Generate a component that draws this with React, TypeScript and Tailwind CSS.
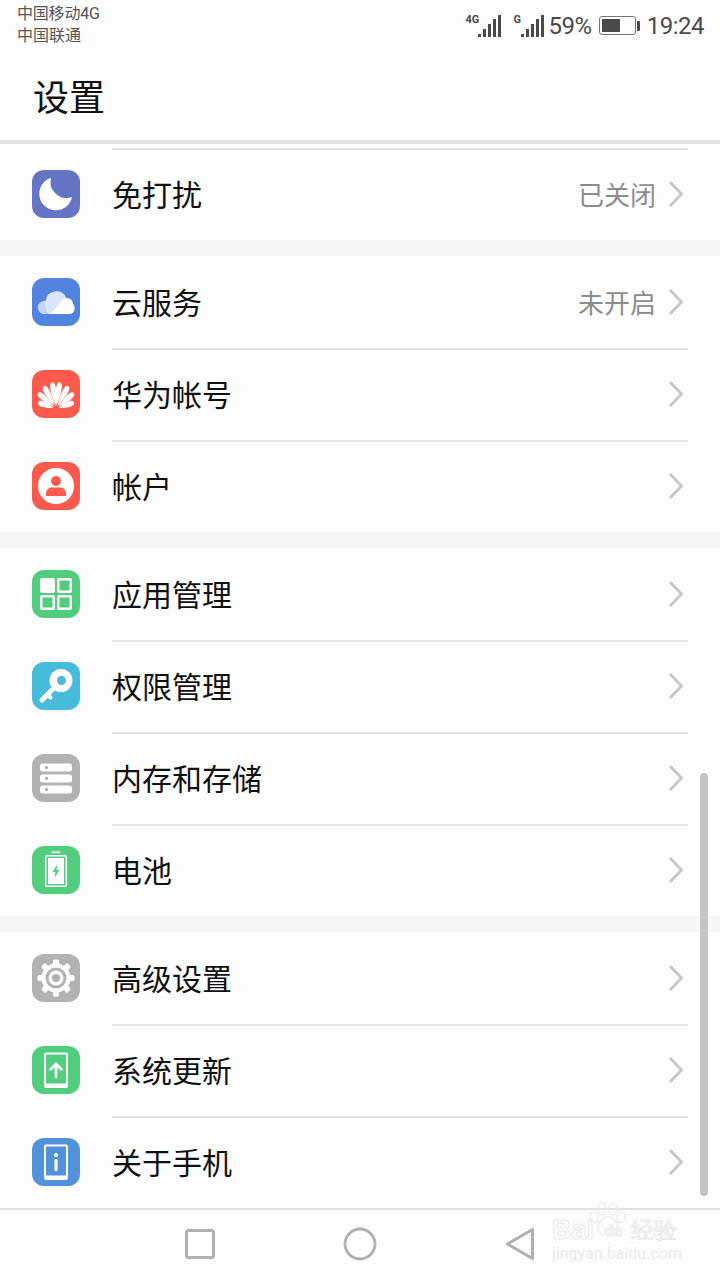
import type { ReactNode } from 'react';

const white = '#ffffff';

function Tile({ color, children }: { color: string; children: ReactNode }) {
  return (
    <div className="h-12 w-12 shrink-0 overflow-hidden rounded-[12px]" style={{ backgroundColor: color }}>
      <svg viewBox="0 0 48 48" className="h-12 w-12" fill="none">
        {children}
      </svg>
    </div>
  );
}

function MoonIcon() {
  return (
    <Tile color="#6574c4">
      <path d="M19 8A16.500 16.500 0 1 0 40 27A16 16 0 0 1 19 8Z" fill={white} />
    </Tile>
  );
}

function CloudIcon() {
  return (
    <Tile color="#5283de">
      <circle cx="12.500" cy="29.500" r="6.700" fill="#c4d5f5" />
      <path d="M16 36C13.500 30 12.500 27 13.500 23A11 11 0 0 1 34 19L30 36Z" fill="#d9e5f9" />
      <path d="M17 36C23 33 26 27 29 23C33 17.500 41 20 41 26C44 29 43 36 37.500 36Z" fill={white} />
    </Tile>
  );
}

function HuaweiIcon() {
  const petals = [
    { a: -70, l: 19 },
    { a: -48, l: 24 },
    { a: -28, l: 26 },
    { a: -8, l: 27 },
    { a: 8, l: 27 },
    { a: 28, l: 26 },
    { a: 48, l: 24 },
    { a: 70, l: 19 },
  ];
  return (
    <Tile color="#fb5a4c">
      {petals.map((p) => (
        <path
          key={p.a}
          d={`M24 36C20 ${39 - p.l * 0.7} 20.500 ${39 - p.l} 24 ${39 - p.l}C27.500 ${39 - p.l} 28 ${39 - p.l * 0.7} 24 36Z`}
          fill={white}
          transform={`rotate(${p.a} 24 39)`}
        />
      ))}
    </Tile>
  );
}

function AccountIcon() {
  return (
    <Tile color="#fb5a4c">
      <circle cx="24" cy="24" r="18" fill={white} />
      <circle cx="24" cy="19" r="5" fill="#fb5a4c" />
      <path d="M14 34V31C14 27.500 17 25.500 20 25.500H28C31 25.500 34 27.500 34 31V34Z" fill="#fb5a4c" />
    </Tile>
  );
}

function AppsIcon() {
  return (
    <Tile color="#52cc7d">
      <rect x="8" y="8" width="15" height="15" rx="2" fill={white} />
      <rect x="26.250" y="9.250" width="12.500" height="12.500" rx="1" stroke={white} strokeWidth="2.500" />
      <rect x="9.250" y="26.250" width="12.500" height="12.500" rx="1" stroke={white} strokeWidth="2.500" />
      <rect x="26.250" y="26.250" width="12.500" height="12.500" rx="1" stroke={white} strokeWidth="2.500" />
    </Tile>
  );
}

function KeyIcon() {
  return (
    <Tile color="#47bbdc">
      <circle cx="29" cy="18.500" r="11.500" fill={white} />
      <circle cx="29.500" cy="18.500" r="4.500" fill="#47bbdc" />
      <path d="M21 27L10 38" stroke={white} strokeWidth="5" strokeLinecap="round" />
      <path d="M15.500 32.500L18.500 35.500" stroke={white} strokeWidth="4" strokeLinecap="round" />
    </Tile>
  );
}

function StorageIcon() {
  return (
    <Tile color="#b2b2b2">
      {[9.500, 20.500, 31.500].map((y) => (
        <g key={y}>
          <rect x="8" y={y} width="32" height="8" rx="2.500" fill={white} />
          <circle cx="14.500" cy={y + 4} r="1.700" fill="#b2b2b2" />
        </g>
      ))}
    </Tile>
  );
}

function BatteryIcon() {
  return (
    <Tile color="#52cc7d">
      <rect x="19.500" y="5.500" width="9" height="1.700" rx="0.800" fill={white} />
      <rect x="13.700" y="9.700" width="20.600" height="30.600" rx="1" stroke={white} strokeWidth="1.600" />
      <rect x="16" y="12" width="16" height="26" fill={white} />
      <path d="M25.500 18L20.500 26H23.500L22.500 32L27.500 24H24.500Z" fill="#52cc7d" />
    </Tile>
  );
}

function GearIcon() {
  const teeth = [0, 45, 90, 135, 180, 225, 270, 315];
  return (
    <Tile color="#b2b2b2">
      {teeth.map((a) => (
        <rect key={a} x="21" y="5.500" width="6" height="7" rx="1.500" fill={white} transform={`rotate(${a} 24 24)`} />
      ))}
      <circle cx="24" cy="24" r="14.500" fill={white} />
      <circle cx="24" cy="24" r="10.500" fill="#b2b2b2" />
      <circle cx="24" cy="24" r="7.500" fill={white} />
      <circle cx="24" cy="24" r="4" fill="#b2b2b2" />
    </Tile>
  );
}

function UpdateIcon() {
  return (
    <Tile color="#52cc7d">
      <path d="M14 6.500H34A2 2 0 0 1 36 8.500V40A2 2 0 0 1 34 42H14A2 2 0 0 1 12 40V8.500A2 2 0 0 1 14 6.500ZM14 8.500V37.500H34V8.500Z" fill={white} fillRule="evenodd" />
      <path d="M24 31V18M18.500 23.500L24 18L29.500 23.500" stroke={white} strokeWidth="2.800" strokeLinecap="round" strokeLinejoin="round" />
    </Tile>
  );
}

function InfoIcon() {
  return (
    <Tile color="#5292dc">
      <path d="M14 6.500H34A2 2 0 0 1 36 8.500V40A2 2 0 0 1 34 42H14A2 2 0 0 1 12 40V8.500A2 2 0 0 1 14 6.500ZM14 8.500V37.500H34V8.500Z" fill={white} fillRule="evenodd" />
      <circle cx="24" cy="17" r="2" fill={white} />
      <rect x="22.500" y="21" width="3" height="12" rx="1.200" fill={white} />
    </Tile>
  );
}

function Chevron() {
  return (
    <svg width="16" height="28" viewBox="0 0 16 28" fill="none" className="ml-[12px] mr-[1px] shrink-0">
      <path d="M2 2L13.500 14L2 26" stroke="#c6c6c6" strokeWidth="2.800" />
    </svg>
  );
}

function Row({ icon, label, value, divider = true }: { icon: ReactNode; label: string; value?: string; divider?: boolean }) {
  return (
    <div className="flex h-[92px] items-center pl-8">
      <div className="mr-8 flex h-full items-center">{icon}</div>
      <div className={`mr-8 flex h-full flex-1 items-center border-t-2 pb-[2px] pr-[3px] ${divider ? 'border-[#e4e4e4]' : 'border-transparent'}`}>
        <span className="mt-[3px] flex-1 text-[30px] leading-none text-[#111111]">{label}</span>
        {value && <span className="mt-[3px] text-[26px] leading-none text-[#8c8c8c]">{value}</span>}
        <Chevron />
      </div>
    </div>
  );
}

function Signal({ label, className }: { label: string; className: string }) {
  const bars = [3, 8, 13, 18, 22];
  return (
    <div className={`relative flex h-[22px] items-end gap-[2px] ${className}`}>
      <span className="absolute top-[-1px] text-[11px] font-bold leading-none text-[#4a4a4a]" style={{ left: label.length > 1 ? -13 : -8 }}>
        {label}
      </span>
      {bars.map((h) => (
        <div key={h} className="w-[3px] bg-[#4a4a4a]" style={{ height: h }} />
      ))}
    </div>
  );
}

function StatusBar() {
  return (
    <div className="flex h-[50px] justify-between pl-[17px] pr-[16px]">
      <div className="pt-[3px] text-[16px] leading-[22px] text-[#555555]">
        <div className="tracking-[-0.2px]">中国移动4G</div>
        <div>中国联通</div>
      </div>
      <div className="flex items-center pt-[1px] text-[#4a4a4a]">
        <Signal label="4G" className="mr-[20px]" />
        <Signal label="G" className="mr-[4px]" />
        <span className="text-[24px] leading-none tracking-[-0.4px]">59%</span>
        <div className="ml-[7px] flex items-center">
          <div className="h-[19px] w-[37px] rounded-[3px] border border-[#777777] p-[2px]">
            <div className="h-full w-[18px] bg-[#4a4a4a]" />
          </div>
          <div className="ml-[1px] h-[10px] w-[3px] rounded-r-[1px] bg-[#4a4a4a]" />
        </div>
        <span className="ml-[7px] text-[24px] leading-none tracking-[-0.5px]">19:24</span>
      </div>
    </div>
  );
}

function Gap() {
  return <div className="h-4 bg-[#f5f5f5]" />;
}

// faint Baidu stamp that sits over the nav bar
function Watermark() {
  const outline = 'text-transparent [-webkit-text-stroke:1px_#ebebeb]';
  return (
    <div className="pointer-events-none absolute left-[552px] top-[-8px] w-[130px]">
      <svg width="40" height="34" viewBox="0 0 40 34" fill="none" className="absolute left-[36px] top-[0px]" stroke="#ebebeb" strokeWidth="1.200">
        <ellipse cx="6" cy="15" rx="4" ry="5.500" />
        <ellipse cx="14" cy="7" rx="4" ry="6" />
        <ellipse cx="25" cy="7" rx="4" ry="6" />
        <ellipse cx="33" cy="15" rx="4" ry="5.500" />
        <circle cx="20" cy="25" r="10" fill="#fdfdfd" />
      </svg>
      <div className="absolute left-0 top-[15px] flex w-[130px] items-center font-['Liberation_Sans',sans-serif]">
        <span className={`text-[27px] font-bold leading-none ${outline}`}>Bai</span>
        <span className={`ml-[10px] text-[15px] font-bold leading-none ${outline}`}>du</span>
        <span className={`ml-[9px] text-[23px] leading-none ${outline}`}>经验</span>
      </div>
      <div className="absolute left-0 top-[44px] text-[16px] leading-none text-[#ececec]">jingyan.baidu.com</div>
    </div>
  );
}

function NavBar() {
  return (
    <div className="relative flex h-[72px] justify-center border-t-2 border-[#e2e2e2]">
      <div className="flex items-center justify-center pb-[2px]">
        <div className="flex w-[160px] justify-center">
          <svg width="30" height="30" viewBox="0 0 30 30" fill="none">
            <rect x="1.500" y="1.500" width="27" height="27" rx="2" stroke="#b0b0b0" strokeWidth="3" />
          </svg>
        </div>
        <div className="flex w-[160px] justify-center">
          <svg width="34" height="34" viewBox="0 0 34 34" fill="none">
            <circle cx="17" cy="17" r="15" stroke="#b0b0b0" strokeWidth="2.800" />
          </svg>
        </div>
        <div className="flex w-[160px] justify-center">
          <svg width="30" height="34" viewBox="0 0 30 34" fill="none">
            <path d="M27.500 2.500V31.500L2.500 17Z" stroke="#b0b0b0" strokeWidth="3" strokeLinejoin="round" />
          </svg>
        </div>
      </div>
      <Watermark />
    </div>
  );
}

export default function App() {
  return (
    <div className="relative h-[1280px] w-[720px] overflow-hidden bg-[#fdfdfd] font-['Roboto','Noto_Sans_CJK_SC',sans-serif]">
      <StatusBar />
      <div className="flex h-[90px] items-center pl-[33px] pt-[7px] text-[36px] leading-none text-[#111111]">设置</div>
      <div className="h-1 bg-[#e2e2e2]" />
      <div className="h-1" />

      <Row icon={<MoonIcon />} label="免打扰" value="已关闭" />
      <Gap />
      <Row icon={<CloudIcon />} label="云服务" value="未开启" divider={false} />
      <Row icon={<HuaweiIcon />} label="华为帐号" />
      <Row icon={<AccountIcon />} label="帐户" />
      <Gap />
      <Row icon={<AppsIcon />} label="应用管理" divider={false} />
      <Row icon={<KeyIcon />} label="权限管理" />
      <Row icon={<StorageIcon />} label="内存和存储" />
      <Row icon={<BatteryIcon />} label="电池" />
      <Gap />
      <Row icon={<GearIcon />} label="高级设置" divider={false} />
      <Row icon={<UpdateIcon />} label="系统更新" />
      <Row icon={<InfoIcon />} label="关于手机" />
      <NavBar />

      {/* scroll thumb lies over the list */}
      <div className="absolute left-[700px] top-[773px] h-[423px] w-2 rounded-full bg-[#c4c4c4]" />
    </div>
  );
}
